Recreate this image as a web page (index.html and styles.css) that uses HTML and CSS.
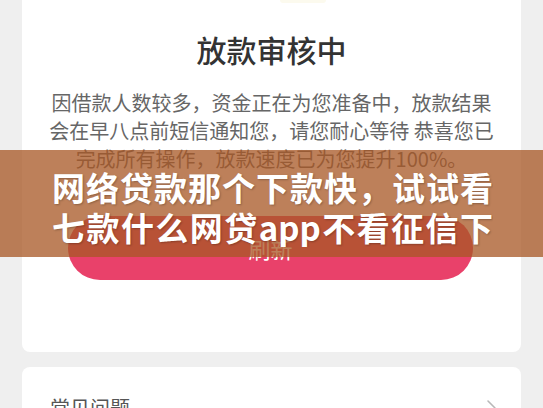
FILE: index.html
```html
<!DOCTYPE html>
<html lang="zh-CN">
<head>
    <meta charset="UTF-8">
    <meta name="viewport" content="width=device-width, initial-scale=1.0">
    <title>放款审核中</title>
    <link rel="stylesheet" href="styles.css">
</head>
<body>
    <div class="page">
        <div class="card status-card">
            <div class="status-icon"></div>
            <h2 class="status-title">放款审核中</h2>
            <p class="status-text">因借款人数较多，资金正在为您准备中，放款结果会在早八点前短信通知您，请您耐心等待 恭喜您已完成所有操作，放款速度已为您提升100%。</p>
            <button type="button" class="refresh-btn">刷新</button>
        </div>

        <div class="card faq-card">
            <span class="faq-label">常见问题</span>
            <svg class="chevron" width="11" height="18" viewBox="0 0 11 18">
                <polyline points="2,2 9,9 2,16" fill="none" stroke="#b8b8b8" stroke-width="1.6" stroke-linecap="round" stroke-linejoin="round"/>
            </svg>
        </div>
    </div>

    <div class="banner">
        <div class="banner-text">网络贷款那个下款快，试试看七款什么网贷app不看征信下款快的平台推荐给大家参考一下吧</div>
    </div>
</body>
</html>
```

FILE: styles.css
```css
body {
    font-family: "Noto Sans CJK SC", "Noto Sans", sans-serif;
    background-color: #efefef;
    margin: 0;
    padding: 0;
}

.page {
    padding: 0 22px;
}

.card {
    background-color: #fff;
    border-radius: 8px;
}

.status-card {
    border-radius: 0 0 8px 8px;
    padding: 0 0 72px;
    text-align: center;
}

.status-icon {
    width: 46px;
    height: 3px;
    margin-left: 258px;
    background-color: #fcfaee;
    border-radius: 0 0 20px 20px;
}

.status-title {
    margin: 26px 0 0;
    font-size: 30px;
    line-height: 40px;
    font-weight: 500;
    color: #333;
}

.status-text {
    margin: 20px 0 0;
    padding: 0 26px;
    font-size: 20px;
    line-height: 28px;
    color: #666;
}

.refresh-btn {
    display: block;
    width: 405px;
    height: 64px;
    margin: 43px auto 0 46px;
    background-color: #e9416a;
    color: #fff;
    border: none;
    border-radius: 32px;
    font-family: inherit;
    font-size: 22px;
}

.faq-card {
    margin-top: 15px;
    padding: 27px 24px 20px 28px;
    display: flex;
    align-items: center;
    justify-content: space-between;
}

.faq-label {
    font-size: 20px;
    line-height: 28px;
    color: #555;
}

/* overlay caption across the screenshot */
.banner {
    position: absolute;
    top: 150px;
    left: 0;
    right: 0;
    height: 107px;
    background-color: rgba(168, 88, 38, 0.76);
    padding: 17px 50px 0 52px;
    box-sizing: border-box;
}

.banner-text {
    height: 80px;
    overflow: hidden;
    font-size: 33px;
    line-height: 40px;
    font-weight: bold;
    color: #fff;
    text-align: justify;
    text-shadow: 1px 1px 2px rgba(0, 0, 0, 0.25);
}
```
